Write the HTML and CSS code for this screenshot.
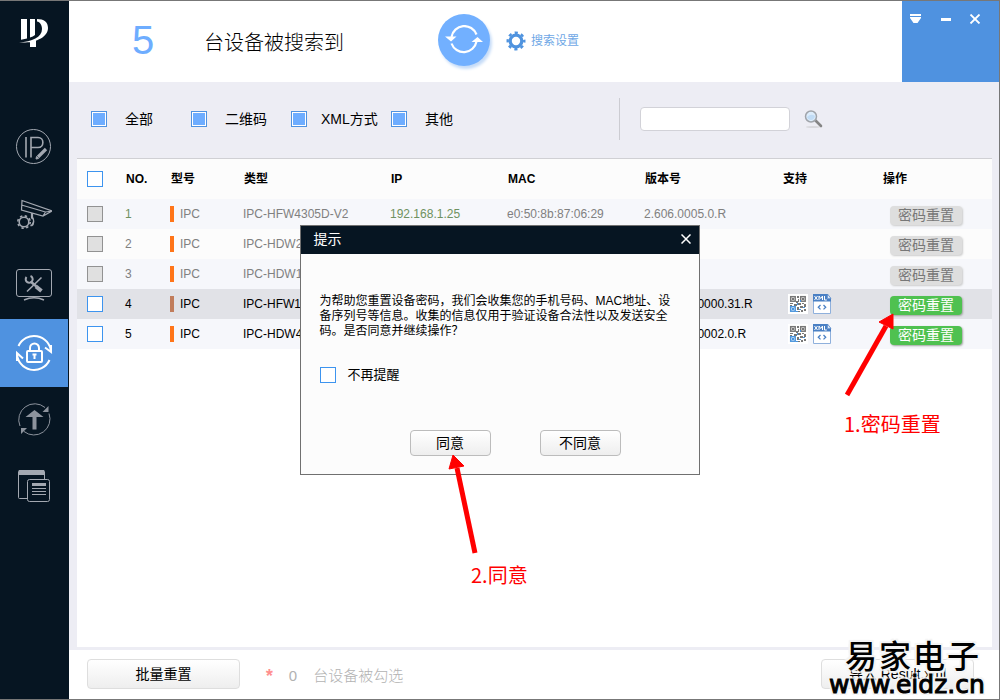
FILE: index.html
```html
<!DOCTYPE html>
<html lang="zh-CN">
<head>
<meta charset="utf-8">
<title>ConfigTool</title>
<link rel="stylesheet" href="styles.css">
</head>
<body>
<svg class="defs" aria-hidden="true">
  <symbol id="qr" viewBox="0 0 20 20">
    <rect width="20" height="20" fill="#fff"/>
    <g fill="none" stroke="#777" stroke-width="1.5"><rect x="2.700" y="2.700" width="4.500" height="4.500"/><rect x="12.700" y="2.700" width="4.500" height="4.500"/></g>
    <rect x="2.700" y="12.700" width="4.500" height="4.500" fill="none" stroke="#4a94dd" stroke-width="1.500"/>
    <path fill="#777" d="M4 4h2v2H4zM14 4h2v2h-2zM9 2h2v2H9zM10 5h1v3h-1zM8 7h2v2H8zM2 9h3v1H2zM6 10h3v2H6zM10 9h3v2h-3zM14 9h2v1h-2zM16 10h2v3h-2zM12 12h3v2h-3zM9 13h2v3H9zM13 16h2v2h-2zM16 15h2v2h-2zM10 17h2v1h-2zM2 11h2v1H2z"/>
    <path fill="#4a94dd" d="M4 14h2v2H4zM9 9h1v2H9zM11 15h2v1h-2zM8 17h2v1H8zM15 13h2v1h-2zM12 6h1v2h-1z"/>
  </symbol>
  <symbol id="xml" viewBox="0 0 20 20">
    <path d="M1.500 1h14l3 3v15.500h-17z" fill="#fff" stroke="#8fb0dc"/>
    <path d="M1 0h14.500v5H19v2.500H1z" fill="#4a80c4"/>
    <path d="M15.500 0v4.500H19z" fill="#dce8f8" stroke="#4a80c4" stroke-width=".7"/>
    <path d="M2.500 2l3 4m0-4l-3 4M7 6V2l1.700 2.500L10.500 2v4M12.500 2v4h2.300" fill="none" stroke="#fff" stroke-width="1"/>
    <path d="M8.500 11L6.300 13.200l2.200 2.200M11.500 11l2.200 2.200-2.200 2.200" fill="none" stroke="#4a80c4" stroke-width="1.300"/>
  </symbol>
</svg>

<div class="app">
  <nav class="sidebar" aria-label="主菜单">
    <div class="logo">
      <svg width="30" height="30" viewBox="0 0 30 30" fill="#fff"><path d="M2 1h6v19.500l-6 1.200zM11 1h5v16q-2 1.600-5 2.600zM18 1c7 0 11 3 11 9 0 9-12 15.500-29 14.500 13-1 23-5 23-13.500 0-4-2-7-5-7.500zM11 24l6-1.500V29h-6z"/></svg>
    </div>
    <button class="nav-item" aria-label="修改IP">
      <svg width="36" height="36" viewBox="0 0 36 36" fill="none" stroke="#a3a8b1"><circle cx="17.500" cy="17.500" r="17"/><path stroke-width="1.600" d="M10 8v20.500M15 28.500V8.500H22c6.500 0 6.500 10 0 10h-7"/><path d="M22 28L30 20" stroke-width="3.200"/><path d="M20 30l.5-2.500 2 2z" fill="#a3a8b1"/></svg>
    </button>
    <button class="nav-item" aria-label="系统配置">
      <svg width="36" height="34" viewBox="0 0 36 34" fill="none" stroke="#a3a8b1" stroke-width="1.200"><path d="M6 1.500L36 12l-9 5L5.500 11zM5.500 6l24 7M29.500 13l6.500-1M29.500 13L27 17M15.500 14v5c3 1 3 6 0 8M16.500 14v4c2 3 1 7-2 9"/><circle cx="8" cy="23" r="4.800" stroke-width="1.600"/><circle cx="8" cy="23" r="6.200" stroke-width="1.600" stroke-dasharray="2.400 2.470"/></svg>
    </button>
    <button class="nav-item" aria-label="系统升级">
      <svg width="38" height="34" viewBox="0 0 38 34" fill="none" stroke="#a3a8b1"><rect x="1.500" y="1.500" width="35" height="27" rx="2.500"/><path d="M9 32q10-4.500 20 0" stroke-width="1.500"/><path d="M12 23.500L26.500 9.500" stroke-width="1.600"/><path d="M21 18.500l5.500 4.500" stroke-width="4"/><path d="M15.500 13.500l6 5" stroke-width="2.500"/><path d="M11.500 9a3.500 3.500 0 1 0 4-1" stroke-width="2"/></svg>
    </button>
    <button class="nav-item nav-item--active" aria-label="密码重置">
      <svg width="40" height="40" viewBox="0 0 40 40" fill="none" stroke="#fff" stroke-width="2"><path d="M4.500 13A17 17 0 0 1 37 19l-6-4.500M35.500 27A17 17 0 0 1 3 20l6 5.500M3 28v-8M37 12v7"/><rect x="13" y="18" width="15" height="11" rx="1"/><path d="M16 18v-3a4.500 4.500 0 0 1 9 0v3M18.500 21.500h4M20.500 22v4"/></svg>
    </button>
    <button class="nav-item nav-item--low" aria-label="升级">
      <svg width="34" height="34" viewBox="0 0 34 34" fill="none" stroke="#8d939d"><path d="M3 23A16 16 0 0 1 28 4.500M32 10.500A16 16 0 0 1 7 28.500"/><path d="M31.500 3v6h-6zM4 31v-6h6z" fill="#8d939d" stroke="none"/><path d="M17.500 7l9 7h-7v12.500h-4V14h-7z" fill="#8d939d" stroke="none"/></svg>
    </button>
    <button class="nav-item nav-item--low" aria-label="模板配置">
      <svg width="34" height="34" viewBox="0 0 34 34" fill="none" stroke="#a3a8b1"><path d="M11 29.500H2.500q-1 0-1-1V2.500q0-1 1-1h24q1 0 1 1V10"/><path d="M2 1h25v5H2z" fill="#a3a8b1" stroke="none"/><rect x="10.500" y="10.500" width="22" height="22" rx="2"/><path d="M15 15.500h14" stroke-width="3"/><path d="M15 19.500h14M15 22.500h14M15 25.500h14"/></svg>
    </button>
  </nav>

  <div class="main">
    <header class="header">
      <span class="count">5</span>
      <span class="found">台设备被搜索到</span>
      <button class="refresh" aria-label="刷新">
        <svg width="40" height="30" viewBox="0 0 40 30" fill="none" stroke="#fff" stroke-width="2.200"><path d="M7.500 12A13 13 0 0 1 32.500 9.500M7.500 18.500A13 13 0 0 0 32.500 16.500"/><path d="M1 11.500h11.500L7 16.500zM27.500 17H39l-5.500-5z" fill="#fff" stroke="none"/></svg>
      </button>
      <button class="settings">
        <svg width="20" height="20" viewBox="0 0 20 20" fill="none" stroke="#4f93df"><circle cx="10" cy="10" r="5.800" stroke-width="3.200"/><circle cx="10" cy="10" r="8.300" stroke-width="2.400" stroke-dasharray="3.200 3.319" stroke-dashoffset="1.600"/></svg>
        搜索设置
      </button>
      <div class="window-controls">
        <button aria-label="菜单"><svg width="12" height="10" viewBox="0 0 12 10" fill="#fff"><path d="M0 0h11v2H0zM0 3h11v1L7.500 9h-4L0 4z"/></svg></button>
        <button aria-label="最小化"><svg width="12" height="10" viewBox="0 0 12 10"><path d="M1 4h10v3H1z" fill="#fff"/></svg></button>
        <button aria-label="关闭"><svg width="12" height="10" viewBox="0 0 12 10"><path d="M1.500 .5l9 9m0-9l-9 9" stroke="#fff" stroke-width="1.800"/></svg></button>
      </div>
    </header>

    <section class="filters">
      <label class="filter"><input class="fill-box" type="checkbox" checked>全部</label>
      <label class="filter"><input class="fill-box" type="checkbox" checked>二维码</label>
      <label class="filter filter--tight"><input class="fill-box" type="checkbox" checked>XML方式</label>
      <label class="filter"><input class="fill-box" type="checkbox" checked>其他</label>
      <div class="search">
        <input class="search-box" type="text" aria-label="搜索">
        <button class="search-button" aria-label="搜索">
          <svg width="20" height="20" viewBox="0 0 20 20"><ellipse cx="9" cy="18" rx="7" ry="1" fill="#d8d8dc"/><path d="M11.500 11.500L17 17" stroke="#858585" stroke-width="2.600" stroke-linecap="round"/><circle cx="7" cy="7.500" r="5.500" fill="#dcecfb" stroke="#a0a4aa" stroke-width="1.500"/><path d="M3 8q4-4 8-1-1 4-4 4t-4-3z" fill="#c1dcf5"/></svg>
        </button>
      </div>
    </section>

    <section class="list">
      <table class="devices">
        <colgroup><col class="c-check"><col class="c-no"><col class="c-kind"><col class="c-model"><col class="c-ip"><col class="c-mac"><col class="c-version"><col class="c-support"><col></colgroup>
        <thead>
          <tr><th><input class="box" type="checkbox" aria-label="全选"></th><th>NO.</th><th>型号</th><th>类型</th><th>IP</th><th>MAC</th><th>版本号</th><th>支持</th><th>操作</th></tr>
        </thead>
        <tbody>
          <tr class="off"><td><input class="box" type="checkbox" disabled aria-label="设备1"></td><td class="online">1</td><td><span class="kind">IPC</span></td><td>IPC-HFW4305D-V2</td><td class="online">192.168.1.25</td><td>e0:50:8b:87:06:29</td><td>2.606.0005.0.R</td><td></td><td class="action"><button class="reset" disabled>密码重置</button></td></tr>
          <tr class="off"><td><input class="box" type="checkbox" disabled aria-label="设备2"></td><td>2</td><td><span class="kind">IPC</span></td><td>IPC-HDW2</td><td></td><td></td><td></td><td></td><td class="action"><button class="reset" disabled>密码重置</button></td></tr>
          <tr class="off"><td><input class="box" type="checkbox" disabled aria-label="设备3"></td><td>3</td><td><span class="kind">IPC</span></td><td>IPC-HDW1</td><td></td><td></td><td></td><td></td><td class="action"><button class="reset" disabled>密码重置</button></td></tr>
          <tr class="selected"><td><input class="box" type="checkbox" aria-label="设备4"></td><td>4</td><td><span class="kind">IPC</span></td><td>IPC-HFW1</td><td></td><td></td><td>2.400.0000000.31.R</td><td><div class="support"><svg width="20" height="20"><use href="#qr"/></svg><svg width="20" height="20"><use href="#xml"/></svg></div></td><td class="action"><button class="reset">密码重置</button></td></tr>
          <tr><td><input class="box" type="checkbox" aria-label="设备5"></td><td>5</td><td><span class="kind">IPC</span></td><td>IPC-HDW4</td><td></td><td></td><td>2.420.0000002.0.R</td><td><div class="support"><svg width="20" height="20"><use href="#qr"/></svg><svg width="20" height="20"><use href="#xml"/></svg></div></td><td class="action"><button class="reset">密码重置</button></td></tr>
        </tbody>
      </table>
    </section>

    <footer class="footer">
      <button class="plain bulk">批量重置</button>
      <span class="star">*</span>
      <span class="checked-count">0</span>
      <span class="checked-label">台设备被勾选</span>
      <button class="plain import">导入 Result.xml</button>
    </footer>
  </div>

  <div class="dialog" role="dialog" aria-labelledby="dialog-title">
    <div class="dialog-head">
      <span id="dialog-title">提示</span>
      <button aria-label="关闭"><svg width="10" height="10" viewBox="0 0 10 10"><path d="M.5 .5l9 9m0-9l-9 9" stroke="#fff" stroke-width="1.500"/></svg></button>
    </div>
    <div class="dialog-body">
      <p>为帮助您重置设备密码，我们会收集您的手机号码、MAC地址、设备序列号等信息。收集的信息仅用于验证设备合法性以及发送安全码。是否同意并继续操作？</p>
      <label class="remind"><input class="box" type="checkbox">不再提醒</label>
      <div class="dialog-actions">
        <button class="plain">同意</button>
        <button class="plain">不同意</button>
      </div>
    </div>
  </div>

  <svg class="arrow arrow--reset" width="52" height="84" viewBox="0 0 52 84"><path d="M2 82L41 13" stroke="#f00" stroke-width="5"/><path d="M48 1L34 9l14 7z" fill="#f00" stroke="#f00"/></svg>
  <span class="note note--reset">1.密码重置</span>
  <svg class="arrow arrow--agree" width="34" height="102" viewBox="0 0 34 102"><path d="M28 99L10 14" stroke="#f00" stroke-width="5"/><path d="M6 1L2 15l15-3z" fill="#f00" stroke="#f00"/></svg>
  <span class="note note--agree">2.同意</span>

  <div class="watermark">
    <div class="watermark-name"><span>易</span><span>家</span><span>电</span><span>子</span></div>
    <div class="watermark-site">www.eidz.cn</div>
  </div>
</div>
</body>
</html>
```

FILE: styles.css
```css
* { box-sizing: border-box; }

body {
  margin: 0;
  color: #000;
  font: 12px/16px "Liberation Sans", "Noto Sans CJK SC", sans-serif;
}

button, input { font: inherit; color: inherit; margin: 0; }
button { padding: 0; border: 0; background: none; cursor: pointer; }
svg { display: block; flex: none; }
.defs { position: absolute; width: 0; height: 0; }

.app {
  position: relative;
  display: flex;
  min-height: 100vh;
  border: 1px solid #777;
  border-left: 0;
  background: #ededf4;
  overflow: hidden;
}

/* Sidebar */
.sidebar {
  flex: none;
  width: 69px;
  border-right: 1px solid #061522;
  background: #061522;
}
.logo { display: flex; justify-content: center; height: 111px; padding-top: 17px; }
.nav-item {
  display: flex;
  align-items: center;
  justify-content: center;
  width: 100%;
  height: 69px;
}
.nav-item--active { height: 68px; background: #4f92e0; }
.nav-item--low { height: 66px; }

/* Header */
.main { flex: 1; display: flex; flex-direction: column; min-width: 0; }
.header {
  display: flex;
  align-items: center;
  height: 81px;
  padding-bottom: 4px;
  background: #fff;
}
.count { width: 72px; margin-left: 63px; color: #6eadff; font-size: 40px; line-height: 44px; }
.found { width: 234px; font-size: 20px; font-weight: 300; line-height: 28px; padding-top: 6px; }
.refresh {
  display: flex;
  align-items: center;
  justify-content: center;
  width: 52px;
  height: 52px;
  border-radius: 50%;
  background: #72b0ff;
  box-shadow: 2px 3px 3px #c6dcf8;
}
.settings { display: flex; align-items: center; gap: 5px; margin-left: 16px; padding-top: 2px; color: #6fa8e6; }
.window-controls {
  display: flex;
  justify-content: space-between;
  align-items: flex-start;
  width: 97px;
  height: 81px;
  margin: 4px 0 0 auto;
  padding: 13px 18px 0 8px;
  background: #4f92e0;
}

/* Filters */
.filters { display: flex; align-items: center; height: 76px; padding: 0 0 2px 22px; }
.filter { display: flex; align-items: center; gap: 18px; width: 100px; font-size: 14px; white-space: nowrap; }
.filter--tight { gap: 14px; }
.fill-box {
  appearance: none;
  flex: none;
  width: 16px;
  height: 16px;
  border: 1px solid #4f92e0;
  background: #6eadff;
  box-shadow: inset 0 0 0 1px #fff;
}
.search {
  display: flex;
  align-items: center;
  height: 42px;
  margin-left: 128px;
  padding-left: 20px;
  border-left: 1px solid #ccccd2;
}
.search-box {
  width: 150px;
  height: 24px;
  padding: 0 6px;
  border: 1px solid #d2d2d8;
  border-radius: 4px;
  background: #fff;
}
.search-button { margin-left: 14px; }

/* Device list */
.list { flex: 1; margin: 0 7px 3px 8px; border-top: 1px solid #d0d0d4; background: #fff; }
.devices { width: 100%; border-collapse: collapse; table-layout: fixed; }
.c-check { width: 48px; }
.c-no { width: 45px; }
.c-kind { width: 73px; }
.c-model { width: 147px; }
.c-ip { width: 117px; }
.c-mac { width: 137px; }
.c-version { width: 138px; }
.c-support { width: 100px; }
.devices th, .devices td { padding: 0; text-align: left; white-space: nowrap; }
.devices th { height: 40px; padding-left: 1px; background: #fcfcfc; font-size: 12px; }
.devices td { height: 30px; }
.devices th:first-child, .devices td:first-child { padding-left: 10px; }
.devices tbody tr:nth-child(odd) { background: #f6f7fb; }
.devices tbody tr:nth-child(even) { background: #fcfcfc; }
.devices tbody tr.selected { background: #e1e2e7; }
.off { color: #808080; }
.off .online { color: #6e9160; }
.box {
  appearance: none;
  display: block;
  flex: none;
  width: 16px;
  height: 16px;
  border: 1px solid #3d94ef;
  background: #fff;
}
.box:disabled { border-color: #929292; background: #e0e0e0; }
.kind { display: block; padding-left: 6px; border-left: 4px solid #ff7519; }
.selected .kind { border-color: #c17d5c; }
.support { display: flex; gap: 4px; padding-left: 6px; }
.devices .action { padding-left: 8px; }
.reset {
  display: block;
  width: 72px;
  height: 19px;
  margin-top: 3px;
  border-radius: 4px;
  background: #4fc150;
  box-shadow: 1px 1px 2px #a0a5a0;
  color: #fff;
  font-size: 14px;
  line-height: 19px;
}
.reset:disabled { background: #dedede; color: #777; box-shadow: 1px 1px 2px #ccc; }

/* Footer */
.footer { display: flex; align-items: center; height: 49px; padding: 0 25px 2px 18px; background: #fff; color: #b2b2b2; }
.plain {
  border: 1px solid #bcbcbc;
  border-radius: 4px;
  background: linear-gradient(#fff, #eee);
  color: #000;
  font-size: 14px;
}
.bulk, .import { width: 153px; height: 30px; border-color: #dedede; }
.import { margin-left: auto; }
.star { margin-left: 24px; padding-top: 6px; color: #ff8f8f; font: bold 18px/18px "Liberation Mono", monospace; }
.checked-count { margin-left: 14px; font-size: 15px; padding-top: 4px; }
.checked-label { margin-left: 16px; font-size: 15px; font-weight: 300; padding-top: 4px; }

/* Dialog */
.dialog {
  position: absolute;
  top: 50%;
  left: 50%;
  width: 400px;
  transform: translate(-50%, -50%);
  border: 1px solid #707070;
  background: #fcfcfc;
}
.dialog-head {
  display: flex;
  align-items: center;
  justify-content: space-between;
  height: 28px;
  padding: 0 8px 3px 13px;
  background: #061522;
  color: #fff;
  font-size: 14px;
}
.dialog-body { padding: 40px 18px 18px 19px; }
.dialog-body p { margin: 0 10px 0 0; line-height: 15px; }
.remind { display: flex; align-items: center; gap: 12px; margin-top: 28px; font-size: 13px; }
.dialog-actions { display: flex; gap: 49px; margin-top: 47px; padding-left: 90px; }
.dialog-actions .plain { width: 81px; height: 26px; }

/* Callouts */
.arrow, .note, .watermark { position: absolute; pointer-events: none; }
.note { color: #f00; font: 20px/28px "Noto Sans CJK SC", sans-serif; }
.arrow--reset { left: 845px; top: 312px; }
.note--reset { left: 844px; top: 409px; }
.arrow--agree { left: 447px; top: 453px; }
.note--agree { left: 471px; top: 560px; }

/* Watermark */
.watermark {
  right: 8px;
  bottom: 0;
  width: 162px;
  text-shadow: -2px -2px 1px #f4f4f4, 2px -2px 1px #f4f4f4, -2px 2px 1px #f4f4f4, 2px 2px 1px #f4f4f4;
}
.watermark-name {
  display: flex;
  justify-content: space-between;
  padding: 0 12px 0 16px;
  font: 500 32px/34px "Noto Sans CJK SC", sans-serif;
}
.watermark-site { font: 25px/28px "DejaVu Sans", sans-serif; white-space: nowrap; -webkit-text-stroke: 1px #000; }
```
